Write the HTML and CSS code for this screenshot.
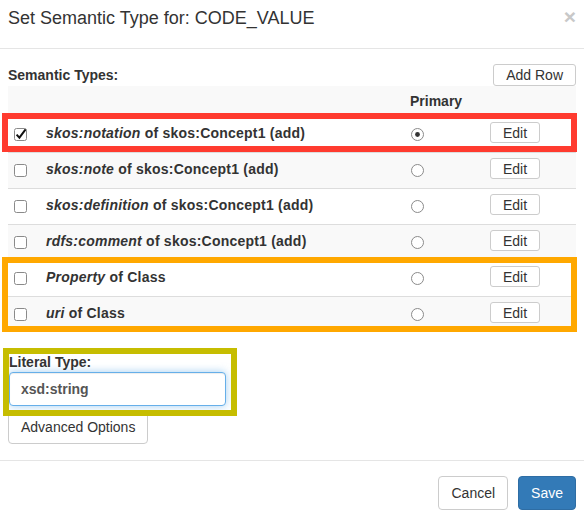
FILE: index.html
```html
<!DOCTYPE html>
<html>
<head>
<meta charset="utf-8">
<title>Set Semantic Type</title>
<link rel="stylesheet" href="styles.css">
</head>
<body>
<div class="modal">
  <div class="modal-header">
    <h4 class="modal-title">Set Semantic Type for: CODE_VALUE</h4>
    <button class="close" type="button">×</button>
  </div>
  <div class="modal-body">
    <div class="toolbar">
      <span class="section-label">Semantic Types:</span>
      <button class="btn btn-sm" type="button">Add Row</button>
    </div>
    <div class="types-table">
      <div class="row row-head">
        <span></span><span></span><span class="primary-head">Primary</span><span></span>
      </div>
      <div class="group group-red">
        <div class="row">
          <span class="cell-check"><svg class="cb" width="13" height="13" viewBox="0 0 13 13"><rect x="0.5" y="0.5" width="12" height="12" rx="2" fill="#fff" stroke="#8a8a8a"/><path d="M2.6 6.6 L5.4 9.6 L11.6 1.4" fill="none" stroke="#111" stroke-width="2"/></svg></span>
          <span class="cell-label"><i>skos:notation</i> of skos:Concept1 (add)</span>
          <span class="cell-radio"><svg class="rb" width="13" height="13" viewBox="0 0 13 13"><circle cx="6.5" cy="6.5" r="6" fill="#fff" stroke="#8a8a8a"/><circle cx="6.5" cy="6.5" r="2.4" fill="#333"/></svg></span>
          <span class="cell-edit"><button class="btn btn-xs" type="button">Edit</button></span>
        </div>
      </div>
      <div class="row striped">
        <span class="cell-check"><svg class="cb" width="13" height="13" viewBox="0 0 13 13"><rect x="0.5" y="0.5" width="12" height="12" rx="2" fill="#fff" stroke="#8a8a8a"/></svg></span>
        <span class="cell-label"><i>skos:note</i> of skos:Concept1 (add)</span>
        <span class="cell-radio"><svg class="rb" width="13" height="13" viewBox="0 0 13 13"><circle cx="6.5" cy="6.5" r="6" fill="#fff" stroke="#8a8a8a"/></svg></span>
        <span class="cell-edit"><button class="btn btn-xs" type="button">Edit</button></span>
      </div>
      <div class="row">
        <span class="cell-check"><svg class="cb" width="13" height="13" viewBox="0 0 13 13"><rect x="0.5" y="0.5" width="12" height="12" rx="2" fill="#fff" stroke="#8a8a8a"/></svg></span>
        <span class="cell-label"><i>skos:definition</i> of skos:Concept1 (add)</span>
        <span class="cell-radio"><svg class="rb" width="13" height="13" viewBox="0 0 13 13"><circle cx="6.5" cy="6.5" r="6" fill="#fff" stroke="#8a8a8a"/></svg></span>
        <span class="cell-edit"><button class="btn btn-xs" type="button">Edit</button></span>
      </div>
      <div class="row striped">
        <span class="cell-check"><svg class="cb" width="13" height="13" viewBox="0 0 13 13"><rect x="0.5" y="0.5" width="12" height="12" rx="2" fill="#fff" stroke="#8a8a8a"/></svg></span>
        <span class="cell-label"><i>rdfs:comment</i> of skos:Concept1 (add)</span>
        <span class="cell-radio"><svg class="rb" width="13" height="13" viewBox="0 0 13 13"><circle cx="6.5" cy="6.5" r="6" fill="#fff" stroke="#8a8a8a"/></svg></span>
        <span class="cell-edit"><button class="btn btn-xs" type="button">Edit</button></span>
      </div>
      <div class="group group-orange">
        <div class="row">
          <span class="cell-check"><svg class="cb" width="13" height="13" viewBox="0 0 13 13"><rect x="0.5" y="0.5" width="12" height="12" rx="2" fill="#fff" stroke="#8a8a8a"/></svg></span>
          <span class="cell-label"><i>Property</i> of Class</span>
          <span class="cell-radio"><svg class="rb" width="13" height="13" viewBox="0 0 13 13"><circle cx="6.5" cy="6.5" r="6" fill="#fff" stroke="#8a8a8a"/></svg></span>
          <span class="cell-edit"><button class="btn btn-xs" type="button">Edit</button></span>
        </div>
        <div class="row striped">
          <span class="cell-check"><svg class="cb" width="13" height="13" viewBox="0 0 13 13"><rect x="0.5" y="0.5" width="12" height="12" rx="2" fill="#fff" stroke="#8a8a8a"/></svg></span>
          <span class="cell-label"><i>uri</i> of Class</span>
          <span class="cell-radio"><svg class="rb" width="13" height="13" viewBox="0 0 13 13"><circle cx="6.5" cy="6.5" r="6" fill="#fff" stroke="#8a8a8a"/></svg></span>
          <span class="cell-edit"><button class="btn btn-xs" type="button">Edit</button></span>
        </div>
      </div>
    </div>
    <div class="literal-group">
      <label class="literal-label">Literal Type:</label>
      <input class="form-control" type="text" value="xsd:string">
    </div>
    <button class="btn btn-adv" type="button">Advanced Options</button>
  </div>
  <div class="modal-footer">
    <button class="btn" type="button">Cancel</button>
    <button class="btn btn-primary" type="button">Save</button>
  </div>
</div>
</body>
</html>
```
FILE: styles.css
```css
* { box-sizing: border-box; }

body {
  margin: 0;
  background: #fff;
  font-family: "Liberation Sans", Arial, Helvetica, sans-serif;
  font-size: 14px;
  line-height: 20px;
  color: #333;
}

.modal { width: 584px; }

.modal-header {
  display: flex;
  justify-content: space-between;
  align-items: flex-start;
  height: 49px;
  padding: 8px 8px 0 8px;
  border-bottom: 1px solid #e5e5e5;
}

.modal-title {
  margin: 0;
  font-size: 18px;
  line-height: 20px;
  font-weight: normal;
  color: #333;
}

.close {
  margin-top: -2px;
  padding: 0;
  border: 0;
  background: none;
  font-family: inherit;
  font-size: 21px;
  line-height: 21px;
  font-weight: bold;
  color: #c8c8c8;
}

.modal-body {
  padding: 15px 8px 16px 8px;
}

.toolbar {
  display: flex;
  justify-content: space-between;
  align-items: center;
  height: 22px;
}

.section-label { font-weight: bold; }

.btn {
  display: inline-flex;
  align-items: center;
  justify-content: center;
  height: 34px;
  padding: 0 12px;
  font-family: inherit;
  font-size: 14px;
  color: #333;
  background: #fff;
  border: 1px solid #ccc;
  border-radius: 4px;
}

.btn-sm { height: 22px; border-radius: 3px; }
.btn-xs { height: 21px; border-radius: 3px; }

.btn-primary {
  background: #337ab7;
  border-color: #2e6da4;
  color: #fff;
}

.types-table {
  margin-bottom: 20px;
}

.row {
  display: grid;
  grid-template-columns: 38px 364px 80px 1fr;
  align-items: center;
  height: 36px;
  padding-bottom: 4px;
  border-top: 1px solid #ddd;
  background: #fff;
}

.row.striped { background: #f9f9f9; }

.row-head {
  height: 30px;
  padding-bottom: 0;
  border-top: 0;
  background: #f9f9f9;
}

.primary-head { font-weight: bold; }

.cell-check { padding-left: 6px; display: flex; margin-top: 3px; }
.cell-check .cb { overflow: visible; }
.cell-label { font-weight: bold; letter-spacing: 0.22px; }
.cell-label i { font-style: italic; }
.cell-radio { padding-left: 1px; display: flex; margin-top: 3px; }
.cell-edit { display: flex; }
.cell-edit .btn { width: 50px; padding: 0; }

.group { position: relative; }

.group::after {
  content: "";
  position: absolute;
  top: -3px;
  left: -6px;
  right: -1px;
  bottom: 0;
  border: 6px solid;
  pointer-events: none;
}

.group-red::after { border-color: #ff3b2f; }
.group-orange::after { border-color: #ffa800; }

.literal-group {
  position: relative;
  width: 223px;
  padding-left: 1px;
}

.literal-group::after {
  content: "";
  position: absolute;
  top: -4px;
  left: -5px;
  right: -6px;
  bottom: -10px;
  border: 6px solid #c6bd00;
  pointer-events: none;
}

.literal-label {
  display: block;
  font-weight: bold;
  height: 20px;
}

.form-control {
  display: block;
  width: 217px;
  height: 34px;
  padding: 0 11px;
  font-family: inherit;
  font-size: 14px;
  font-weight: bold;
  color: #555;
  background: #fff;
  border: 1px solid #66afe9;
  border-radius: 4px;
  outline: none;
  box-shadow: inset 0 1px 1px rgba(0,0,0,.075), 0 0 8px rgba(102,175,233,.6);
}

.btn-adv { margin-top: 4px; }

.modal-footer {
  display: flex;
  justify-content: flex-end;
  gap: 10px;
  padding: 15px 8px 15px 8px;
  border-top: 1px solid #e5e5e5;
}
```
